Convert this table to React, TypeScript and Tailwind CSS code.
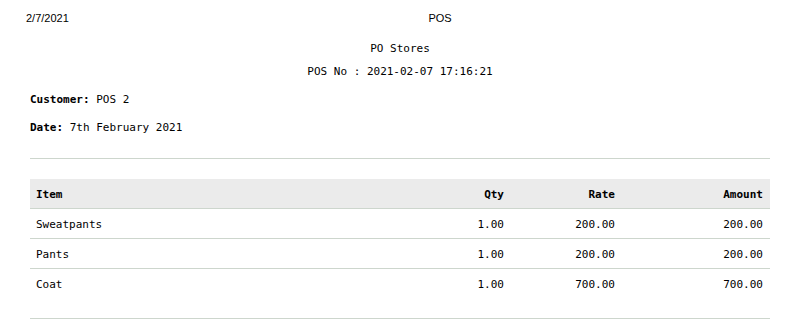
const items = [
  { name: "Sweatpants", qty: "1.00", rate: "200.00", amount: "200.00" },
  { name: "Pants", qty: "1.00", rate: "200.00", amount: "200.00" },
  { name: "Coat", qty: "1.00", rate: "700.00", amount: "700.00" },
];

const mono = "font-['DejaVu_Sans_Mono','Liberation_Mono',monospace]";

export default function App() {
  return (
    <div className="bg-white min-h-screen w-[793px] text-black">
      {/* print header */}
      <div className="flex pl-[26px] pr-[26px] pt-[11px] h-[26px] text-[11px] leading-[14px] font-['Liberation_Sans',Arial,sans-serif]">
        <div className="w-[87px]">2/7/2021</div>
        <div className="flex-1 text-center">POS</div>
      </div>

      <div className={`pl-[30px] pr-[23px] text-[11px] ${mono}`}>
        <div className="text-center leading-[20px] mt-[13px]">PO Stores</div>
        <div className="text-center leading-[20px] mt-[3px]">
          POS No : 2021-02-07 17:16:21
        </div>

        <div className="leading-[20px] mt-[8px]">
          <span className="font-bold">Customer:</span> POS 2
        </div>
        <div className="leading-[20px] mt-[8px]">
          <span className="font-bold">Date:</span> 7th February 2021
        </div>

        <div className="border-t border-[#cdd6cd] mt-[20px]" />

        <div className="mt-[20px]">
          <div className="grid grid-cols-[1fr_111px_111px_148px] h-[30px] pt-[3px] items-center bg-[#ebebeb] border-b border-[#cdd6cd] font-bold">
            <div className="pl-[6px]">Item</div>
            <div className="text-right pr-[7px]">Qty</div>
            <div className="text-right pr-[7px]">Rate</div>
            <div className="text-right pr-[7px]">Amount</div>
          </div>
          {items.map((it, i) => (
            <div
              key={it.name}
              className={`grid grid-cols-[1fr_111px_111px_148px] h-[30px] pt-[3px] items-center ${
                i < items.length - 1 ? "border-b border-[#cdd6cd]" : ""
              }`}
            >
              <div className="pl-[6px]">{it.name}</div>
              <div className="text-right pr-[7px]">{it.qty}</div>
              <div className="text-right pr-[7px]">{it.rate}</div>
              <div className="text-right pr-[7px]">{it.amount}</div>
            </div>
          ))}
        </div>

        <div className="border-t border-[#cdd6cd] mt-[19px]" />
      </div>
    </div>
  );
}
